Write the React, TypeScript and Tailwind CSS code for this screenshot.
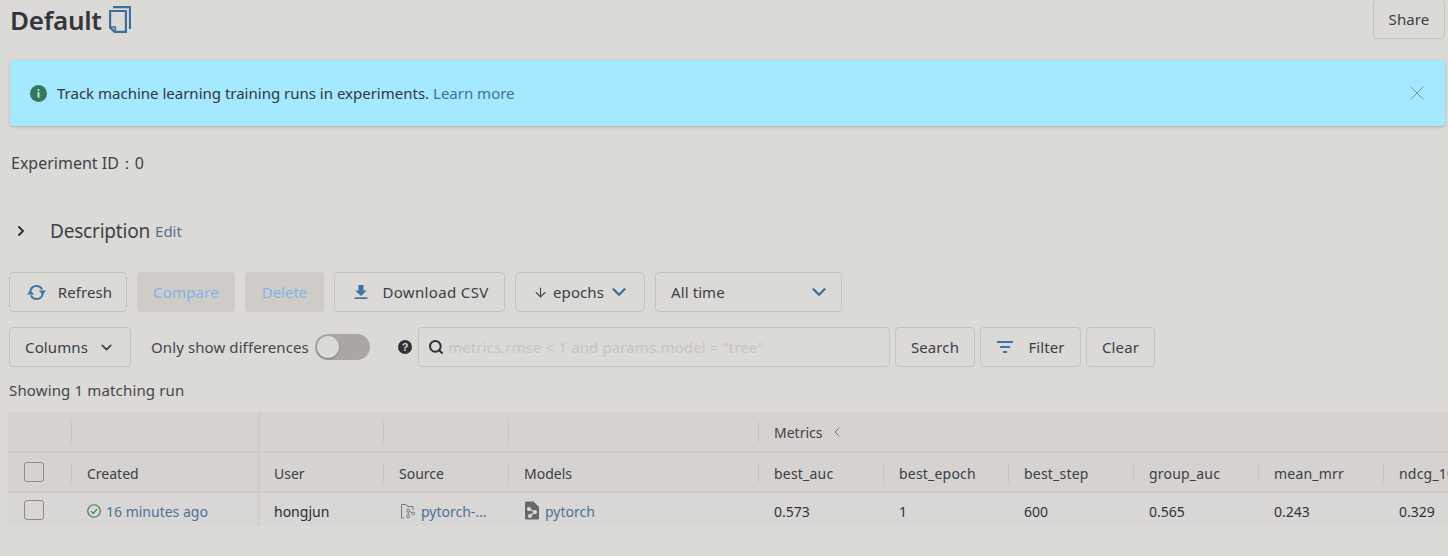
import React from "react";
import { ChevronDown, ChevronRight, ChevronLeft, X, Search, ArrowDown } from "lucide-react";

const btn = "h-10 flex items-center justify-center rounded border border-[#c5c3bf] text-[#3a3f45] shrink-0 text-[15px] tracking-[0.1px]";

function Sep({ className = "h-[19px]" }: { className?: string }) {
  return <span className={`w-px bg-[#c6c2bf] shrink-0 ${className}`} />;
}

const metrics = [
  ["best_auc", "0.573"],
  ["best_epoch", "1"],
  ["best_step", "600"],
  ["group_auc", "0.565"],
  ["mean_mrr", "0.243"],
  ["ndcg_10", "0.329"],
];

function Box() {
  return <span className="block w-[20px] h-[20px] rounded-[3px] border-[1.5px] border-[#8f8a86]" />;
}

export default function App() {
  return (
    <div className="w-[1448px] h-[556px] overflow-hidden bg-[#dbdad6] text-[#3a3f45] font-['Noto_Sans',sans-serif] text-[14px]">
      {/* title */}
      <div className="flex h-[60px] pl-[10px] pr-[3px]">
        <div className="flex items-start gap-[7px] pt-[1px]">
          <h1 className="text-[26px] font-semibold leading-[38px] text-[#32373d] tracking-[-0.3px]">Default</h1>
          <svg width="22" height="27" viewBox="0 0 22 27" fill="none" stroke="#3d6f9e" strokeWidth="2.2" className="mt-[5px]">
            <path d="M4 1.1h17v22" />
            <path d="M1.1 5h15.8v20.9H5.5L1.1 21.5z" />
            <path d="M1.5 21h4.8v4.5" strokeWidth="1.6" />
          </svg>
        </div>
        <button className={`${btn} ml-auto w-[72px] -mt-[1px]`}>Share</button>
      </div>

      {/* alert */}
      <div className="mx-[10px] w-[1435px] h-[66px] rounded bg-[#a4e9ff] shadow-[0_1px_3px_rgba(0,0,0,0.22)] flex items-center pl-[20px] pr-[16px]">
        <svg width="17" height="17" viewBox="0 0 17 17" className="shrink-0">
          <circle cx="8.5" cy="8.5" r="8.5" fill="#34785f" />
          <rect x="7.6" y="7.2" width="1.8" height="5.4" fill="#d7efe6" />
          <rect x="7.6" y="4.2" width="1.8" height="1.8" fill="#d7efe6" />
        </svg>
        <span className="ml-[10px] text-[15px] text-[#32373d]">Track machine learning training runs in experiments. <span className="text-[#3f70a0]">Learn more</span></span>
        <X size={24} strokeWidth={1} className="ml-auto text-[#73919e]" />
      </div>

      <div className="mt-[25px] pl-[11px] h-[24px] leading-[24px] text-[16px] text-[#3f4247]">Experiment ID：0</div>

      <div className="mt-[36px] h-[40px] pl-[13px] flex items-center">
        <ChevronRight size={16} strokeWidth={3} className="text-[#2f3338]" />
        <span className="ml-[21px] text-[19px] tracking-[-0.2px] text-[#3f4247]">Description</span>
        <span className="ml-[5px] text-[15px] text-[#56708c]">Edit</span>
      </div>

      {/* toolbar 1 */}
      <div className="mt-[21px] pl-[9px] flex gap-[10px]">
        <button className={`${btn} w-[118px] gap-[11px] pl-[2px]`}>
          <svg width="21" height="17" viewBox="0 0 21 17" fill="none" stroke="#3d76a6" strokeWidth="2">
            <path d="M4 8.5C4.5 4.5 7.2 2 10.5 2c2.6 0 4.6 1.4 5.6 3.6" />
            <path d="M17 8.5c-.5 4-3.2 6.5-6.5 6.5-2.6 0-4.6-1.4-5.6-3.6" />
            <path d="M12.8 6.8h7.4l-3.7-4.2z" transform="rotate(180 16.5 6.7)" fill="#3d76a6" stroke="none" />
            <path d="M.8 10.2h7.4l-3.7 4.2z" transform="rotate(180 4.5 10.3)" fill="#3d76a6" stroke="none" />
          </svg>
          Refresh
        </button>
        <button className="h-10 w-[98px] rounded bg-[#cfccc8] text-[#7fb4ea] shrink-0 text-[15px] tracking-[0.2px]">Compare</button>
        <button className="h-10 w-[79px] rounded bg-[#cfccc8] text-[#7fb4ea] shrink-0 text-[15px]">Delete</button>
        <button className={`${btn} w-[171px] gap-[13px] pl-[3px] !tracking-[0.35px]`}>
          <svg width="16" height="16" viewBox="0 0 16 16" fill="#3d76a6">
            <path d="M5.5 1h5v5.5h3.3L8 12 2.2 6.5h3.3z" />
            <rect x="1.5" y="13.3" width="13" height="1.7" />
          </svg>
          Download CSV
        </button>
        <button className={`${btn} w-[130px] !justify-start pl-[17px] gap-[4px]`}>
          <span className="flex items-center gap-[5px]"><ArrowDown size={15} strokeWidth={1.7} className="text-[#3f4247]" />epochs</span>
          <ChevronDown size={22} strokeWidth={2.6} className="text-[#3d6f9e]" />
        </button>
        <button className={`${btn} w-[187px] !justify-between pl-[15px] pr-[11px]`}>
          All time
          <ChevronDown size={22} strokeWidth={2.6} className="text-[#3d6f9e]" />
        </button>
      </div>

      {/* toolbar 2 */}
      <div className="mt-[15px] pl-[9px] flex items-center">
        <button className={`${btn} w-[122px] gap-[10px]`}>
          Columns <ChevronDown size={17} strokeWidth={2.4} className="text-[#3f4247]" />
        </button>
        <span className="ml-[20px] w-[164px] text-[15px] tracking-[0.1px] text-[#44474b] whitespace-nowrap">Only show differences</span>
        <span className="w-[55px] h-[26px] rounded-full bg-[#aaa7a3] flex items-center pl-[2px]">
          <span className="w-[22px] h-[22px] rounded-full bg-[#dbdad6] shadow-[0_1px_2px_rgba(0,0,0,0.3)]" />
        </span>
        <svg width="14" height="14" viewBox="0 0 14 14" className="ml-[28px]">
          <circle cx="7" cy="7" r="7" fill="#2f3236" />
          <text x="7" y="11" textAnchor="middle" fontSize="11" fontWeight="700" fill="#dbdad6" fontFamily="Liberation Sans">?</text>
        </svg>
        <div className="ml-[6px] w-[472px] h-10 rounded border border-[#c5c3bf] flex items-center pl-[9px] shrink-0">
          <Search size={16} strokeWidth={3} className="text-[#2f3338] shrink-0" />
          <span className="ml-[4px] text-[15px] tracking-[0.12px] text-[#c6c4c0] whitespace-nowrap">metrics.rmse &lt; 1 and params.model = "tree"</span>
        </div>
        <button className={`${btn} ml-[5px] w-[80px]`}>Search</button>
        <button className={`${btn} ml-[5px] w-[101px] gap-[14px]`}>
          <svg width="18" height="14" viewBox="0 0 18 14" fill="#3d76a6">
            <rect x="1" y="1" width="16" height="2" />
            <rect x="4" y="6" width="10" height="2" />
            <rect x="7" y="11" width="4" height="2" />
          </svg>
          Filter
        </button>
        <button className={`${btn} ml-[5px] w-[69px]`}>Clear</button>
      </div>

      <div className="mt-[13px] pl-[9px] h-[20px] leading-[20px] text-[15px] tracking-[0.15px] text-[#44474b]">Showing 1 matching run</div>

      {/* table */}
      <div className="mt-[12px] ml-[8px] w-[1440px] overflow-hidden">
        <div className="h-[41px] bg-[#d6d2cf] border-b-2 border-[#cfccc8] flex items-center">
          <div className="w-[63px] shrink-0" />
          <Sep className="h-[20px]" />
          <div className="w-[186px] shrink-0" />
          <span className="w-[2px] self-stretch bg-[#cfccc8] shrink-0" />
          <div className="w-[123px] shrink-0" />
          <Sep className="h-[20px]" />
          <div className="w-[124px] shrink-0" />
          <Sep className="h-[20px]" />
          <div className="w-[249px] shrink-0" />
          <Sep className="h-[20px]" />
          <span className="ml-[15px] pt-[1px] text-[#3f4247]">Metrics</span>
          <ChevronLeft size={16} strokeWidth={1.2} className="ml-[7px] mt-[1px] text-[#55585c]" />
        </div>
        <div className="h-[40px] bg-[#d6d2cf] border-b-2 border-[#cfccc8] flex items-center whitespace-nowrap">
          <div className="w-[63px] shrink-0 pl-[16px]"><Box /></div>
          <Sep />
          <div className="w-[186px] shrink-0 pl-[15px] pt-[3px]">Created</div>
          <span className="w-[2px] self-stretch bg-[#cfccc8] shrink-0" />
          <div className="w-[123px] shrink-0 pl-[14px] pt-[3px]">User</div>
          <Sep />
          <div className="w-[124px] shrink-0 pl-[15px] pt-[3px]">Source</div>
          <Sep />
          <div className="w-[249px] shrink-0 pl-[15px] pt-[3px]">Models</div>
          {metrics.map(([n]) => (
            <div key={n} className="w-[125px] shrink-0 flex items-center">
              <Sep />
              <span className="pl-[15px] pt-[3px] tracking-[0.2px]">{n}</span>
            </div>
          ))}
        </div>
        <div className="h-[33px] bg-[#d9d7d5] flex items-center whitespace-nowrap">
          <div className="w-[64px] shrink-0 pl-[16px]"><Box /></div>
          <div className="w-[186px] shrink-0 pl-[15px] pt-[3px] flex items-center gap-[5px]">
            <svg width="14" height="14" viewBox="0 0 13 13" fill="none" stroke="#3f7d5c" strokeWidth="1.1">
              <circle cx="6.5" cy="6.5" r="5.8" />
              <path d="M3.8 6.7l2 2 3.5-4" />
            </svg>
            <span className="text-[#4a7299]">16 minutes ago</span>
          </div>
          <span className="w-[2px] self-stretch bg-[#d2cfcc] shrink-0" />
          <div className="w-[124px] shrink-0 pl-[14px] pt-[3px] text-[#2a2c30]">hongjun</div>
          <div className="w-[125px] shrink-0 pl-[16px] pt-[3px] flex items-center gap-[5px]">
            <svg width="16" height="16" viewBox="0 0 16 16" fill="none" stroke="#77797b" strokeWidth="1">
              <path d="M4 15H1.5V1.5H6l1.5 2H13V7" />
              <circle cx="8.2" cy="7.5" r="1.5" />
              <circle cx="8.2" cy="13.3" r="1.5" />
              <circle cx="13.3" cy="10.5" r="1.5" />
              <path d="M8.2 9v2.8M9.5 8.3l2.6 1.6" />
            </svg>
            <span className="text-[#4a7299]">pytorch-...</span>
          </div>
          <div className="w-[250px] shrink-0 pl-[16px] pt-[3px] flex items-center gap-[6px]">
            <svg width="14" height="19" viewBox="0 0 14 19" className="-mt-[2px]">
              <path d="M0 1.5Q0 .5 1 .5h7.5L14 6v11.5q0 1-1 1H1q-1 0-1-1z" fill="#66686a" />
              <circle cx="4" cy="8" r="2" fill="#dedcd9" />
              <circle cx="10" cy="11" r="2" fill="#dedcd9" />
              <circle cx="5" cy="15" r="2" fill="#dedcd9" />
              <path d="M4 8l6 3-5 4" stroke="#dedcd9" strokeWidth="1.1" fill="none" />
            </svg>
            <span className="text-[#4a7299]">pytorch</span>
          </div>
          {metrics.map(([n, v]) => (
            <div key={n} className="w-[125px] shrink-0 pl-[15px] pt-[3px] text-[#2f3338]">{v}</div>
          ))}
        </div>
      </div>
    </div>
  );
}
